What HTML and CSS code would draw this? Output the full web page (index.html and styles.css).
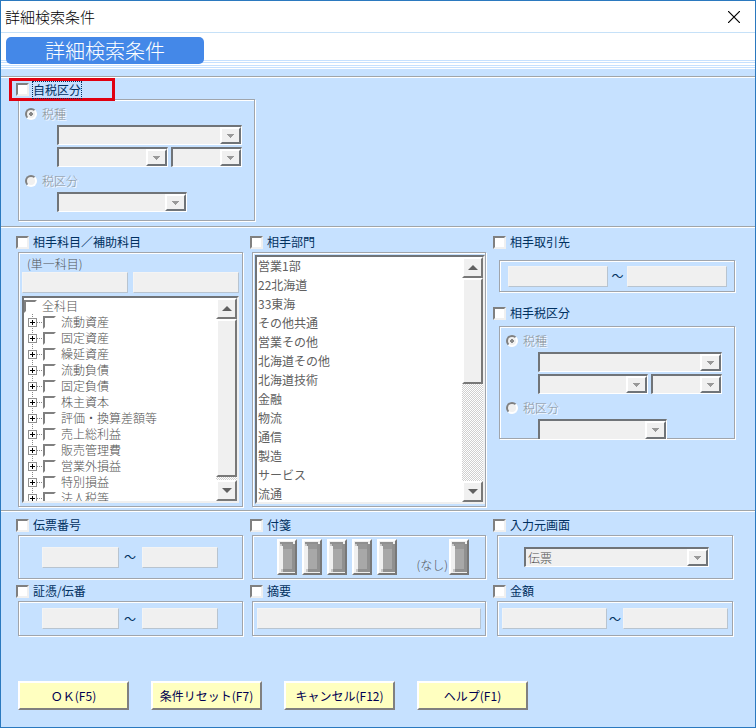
FILE: index.html
```
<!DOCTYPE html>
<html lang="ja">
<head>
<meta charset="utf-8">
<title>詳細検索条件</title>
<link rel="stylesheet" href="styles.css">
</head>
<body>
<div class="window">
  <div class="titlebar">
    <span>詳細検索条件</span>
    <button class="close" type="button" aria-label="閉じる">
      <svg viewBox="0 0 12 12" width="12" height="12"><path d="M0 0L12 12M12 0L0 12"/></svg>
    </button>
  </div>
  <header class="banner"><h1>詳細検索条件</h1></header>

  <form class="form">
    <section class="section own-tax">
      <label class="check marked"><input type="checkbox"><span class="focused">自税区分</span></label>
      <div class="panel tax">
        <label class="radio"><input type="radio" name="own" checked disabled>税種</label>
        <div class="tax-row"><div class="combo"><select disabled aria-label="税種"></select></div></div>
        <div class="tax-row">
          <div class="combo wide"><select disabled aria-label="税率"></select></div>
          <div class="combo narrow"><select disabled aria-label="業種"></select></div>
        </div>
        <label class="radio second"><input type="radio" name="own" disabled>税区分</label>
        <div class="tax-row"><div class="combo part"><select disabled aria-label="税区分"></select></div></div>
      </div>
    </section>

    <section class="section columns accounts">
      <div class="column">
        <label class="check"><input type="checkbox">相手科目／補助科目</label>
        <div class="panel account-panel">
          <div class="caption">(単一科目)</div>
          <div class="pair">
            <input class="field" type="text" disabled aria-label="科目">
            <input class="field" type="text" disabled aria-label="補助科目">
          </div>
          <div class="listbox">
            <ul class="tree">
              <li class="root"><label><input type="checkbox">全科目</label></li>
              <li><i class="plus"></i><label><input type="checkbox">流動資産</label></li>
              <li><i class="plus"></i><label><input type="checkbox">固定資産</label></li>
              <li><i class="plus"></i><label><input type="checkbox">繰延資産</label></li>
              <li><i class="plus"></i><label><input type="checkbox">流動負債</label></li>
              <li><i class="plus"></i><label><input type="checkbox">固定負債</label></li>
              <li><i class="plus"></i><label><input type="checkbox">株主資本</label></li>
              <li><i class="plus"></i><label><input type="checkbox">評価・換算差額等</label></li>
              <li><i class="plus"></i><label><input type="checkbox">売上総利益</label></li>
              <li><i class="plus"></i><label><input type="checkbox">販売管理費</label></li>
              <li><i class="plus"></i><label><input type="checkbox">営業外損益</label></li>
              <li><i class="plus"></i><label><input type="checkbox">特別損益</label></li>
              <li><i class="plus"></i><label><input type="checkbox">法人税等</label></li>
            </ul>
            <div class="scroll">
              <button class="arrow up" type="button" aria-label="上へ"></button>
              <div class="thumb long"></div>
              <div class="track"></div>
              <button class="arrow down" type="button" aria-label="下へ"></button>
            </div>
          </div>
        </div>
      </div>

      <div class="column">
        <label class="check"><input type="checkbox">相手部門</label>
        <div class="panel department-panel">
          <div class="listbox">
            <select class="departments" multiple disabled aria-label="相手部門">
              <option>営業1部</option>
              <option>22北海道</option>
              <option>33東海</option>
              <option>その他共通</option>
              <option>営業その他</option>
              <option>北海道その他</option>
              <option>北海道技術</option>
              <option>金融</option>
              <option>物流</option>
              <option>通信</option>
              <option>製造</option>
              <option>サービス</option>
              <option>流通</option>
            </select>
            <div class="scroll">
              <button class="arrow up" type="button" aria-label="上へ"></button>
              <div class="thumb short"></div>
              <div class="track"></div>
              <button class="arrow down" type="button" aria-label="下へ"></button>
            </div>
          </div>
        </div>
      </div>

      <div class="column">
        <label class="check"><input type="checkbox">相手取引先</label>
        <div class="panel partner-panel">
          <input class="field" type="text" disabled aria-label="取引先 開始">
          <span class="tilde">～</span>
          <input class="field" type="text" disabled aria-label="取引先 終了">
        </div>
        <label class="check partner-tax-label"><input type="checkbox">相手税区分</label>
        <div class="panel tax tight">
          <label class="radio"><input type="radio" name="partner" checked disabled>税種</label>
          <div class="tax-row"><div class="combo"><select disabled aria-label="相手税種"></select></div></div>
          <div class="tax-row">
            <div class="combo wide"><select disabled aria-label="相手税率"></select></div>
            <div class="combo narrow"><select disabled aria-label="相手業種"></select></div>
          </div>
          <label class="radio second"><input type="radio" name="partner" disabled>税区分</label>
          <div class="tax-row"><div class="combo part"><select disabled aria-label="相手税区分"></select></div></div>
        </div>
      </div>
    </section>

    <section class="section columns vouchers">
      <div class="column">
        <label class="check"><input type="checkbox">伝票番号</label>
        <div class="panel tall range">
          <input class="field" type="text" disabled aria-label="伝票番号 開始">
          <span class="tilde">～</span>
          <input class="field" type="text" disabled aria-label="伝票番号 終了">
        </div>
      </div>
      <div class="column">
        <label class="check"><input type="checkbox">付箋</label>
        <div class="panel tall notes">
          <button class="note" type="button" disabled aria-label="付箋1"><svg viewBox="0 0 15 30"><use href="#tag"/></svg></button>
          <button class="note" type="button" disabled aria-label="付箋2"><svg viewBox="0 0 15 30"><use href="#tag"/></svg></button>
          <button class="note" type="button" disabled aria-label="付箋3"><svg viewBox="0 0 15 30"><use href="#tag"/></svg></button>
          <button class="note" type="button" disabled aria-label="付箋4"><svg viewBox="0 0 15 30"><use href="#tag"/></svg></button>
          <button class="note" type="button" disabled aria-label="付箋5"><svg viewBox="0 0 15 30"><use href="#tag"/></svg></button>
          <span class="none">(なし)</span>
          <button class="note" type="button" disabled aria-label="付箋なし"><svg viewBox="0 0 15 30"><use href="#tag"/></svg></button>
        </div>
      </div>
      <div class="column">
        <label class="check"><input type="checkbox">入力元画面</label>
        <div class="panel tall source">
          <div class="combo"><select disabled aria-label="入力元画面"><option>伝票</option></select></div>
        </div>
      </div>
      <div class="column">
        <label class="check"><input type="checkbox">証憑/伝番</label>
        <div class="panel low range">
          <input class="field" type="text" disabled aria-label="証憑 開始">
          <span class="tilde">～</span>
          <input class="field" type="text" disabled aria-label="証憑 終了">
        </div>
      </div>
      <div class="column">
        <label class="check"><input type="checkbox">摘要</label>
        <div class="panel low filled">
          <input class="field" type="text" disabled aria-label="摘要">
        </div>
      </div>
      <div class="column">
        <label class="check"><input type="checkbox">金額</label>
        <div class="panel low filled">
          <input class="field" type="text" disabled aria-label="金額 開始">
          <span class="tilde slim">～</span>
          <input class="field" type="text" disabled aria-label="金額 終了">
        </div>
      </div>
    </section>

    <div class="actions">
      <button type="button">ＯＫ(F5)</button>
      <button type="button">条件リセット(F7)</button>
      <button type="button">キャンセル(F12)</button>
      <button type="button">ヘルプ(F1)</button>
    </div>
  </form>
</div>

<svg class="defs" width="0" height="0" aria-hidden="true">
  <symbol id="tag" viewBox="0 0 15 30">
    <path fill="#909090" d="M0 0H13V2H15V30H2V28H3V4H0z"/>
    <path fill="#a8a8a8" d="M3 7H12V27H3z"/>
    <path fill="#989898" d="M3 2H12V7H3z"/>
    <path fill="#c8c8c8" d="M0 2H2V4H0zM1 27H3V30H1z"/>
  </symbol>
</svg>
</body>
</html>
```
FILE: styles.css
```
* { box-sizing: border-box; }

body {
  margin: 0;
  font: 300 12px/16px "Noto Sans CJK JP", sans-serif;
  color: #003060;
}

input, select, button {
  margin: 0;
  padding: 0;
  font: inherit;
  color: inherit;
  border-radius: 0;
  appearance: none;
}

.defs { position: absolute; }

.window {
  min-height: 100vh;
  border: 1px solid #2b79bf;
  background: #c6e1ff;
}

.titlebar {
  display: flex;
  align-items: center;
  justify-content: space-between;
  height: 31px;
  padding: 0 15px 0 4px;
  background: #fff;
  color: #000;
  font-size: 15px;
}

.close {
  display: flex;
  border: 0;
  background: none;
}

.close path {
  stroke: #000;
  stroke-width: 1.2;
}

.banner {
  height: 37px;
  padding: 4px 5px 0;
  border-top: 1px solid #c6e1f8;
  background: linear-gradient(#fff 27px, #c6e1ff 27px 28px, #fff 28px 29px, #c6e1ff 29px 30px, #fff 30px 32px, #c6e1ff 32px 33px, #fff 33px 34px, #c6e1ff 34px 35px, #fff 35px);
}

.banner h1 {
  width: 198px;
  height: 27px;
  margin: 0;
  border-radius: 5px;
  background: #4488e8;
  color: #fff;
  font-size: 20px;
  font-weight: 300;
  line-height: 28px;
  text-align: center;
}

.form { padding-top: 7px; }

.section {
  padding: 0 20px 0 15px;
  border-top: 1px solid #a0a5a8;
  box-shadow: inset 0 1px #fff;
}

.own-tax { padding-top: 1px; padding-bottom: 5px; }
.own-tax .panel { width: 33%; }

.columns {
  display: grid;
  grid-template-columns: 227fr 236fr 242fr;
  column-gap: 7px;
}

.accounts { padding-top: 5px; padding-bottom: 3px; }
.vouchers { padding-top: 4px; row-gap: 2px; }

.column {
  display: flex;
  flex-direction: column;
  min-width: 0;
}

.check {
  display: flex;
  align-items: center;
  align-self: flex-start;
  gap: 4px;
  height: 20px;
  font-weight: 400;
}

.check input, .tree input {
  width: 13px;
  height: 13px;
  border: 2px solid;
  border-color: #808080 #f0f0f0 #f0f0f0 #808080;
  background: #fff;
}

.check input:checked, .tree input:checked { background: #003060; }

.marked {
  position: relative;
  z-index: 1;
  width: 106px;
  height: 23px;
  margin: 0 0 -2px -7px;
  padding-left: 4px;
  border: 3px solid #e00010;
}

.focused { outline: 1px dotted #003060; }

.panel {
  margin-left: 2px;
  border: 1px solid #a0a5ac;
  box-shadow: 1px 1px #fff, inset 1px 1px #fff;
}

/* tax group */
.tax {
  display: flex;
  flex-direction: column;
  gap: 2px;
  padding: 5px 12px 8px 6px;
}

.radio {
  display: flex;
  align-items: center;
  gap: 5px;
  height: 18px;
  color: #888e94;
  text-shadow: 1px 1px #fff;
}

.radio.second { margin-top: 3px; }

.radio input {
  width: 12px;
  height: 12px;
  border: 2px solid;
  border-color: #808080 #fff #fff #808080;
  border-radius: 50%;
  background: #f0f0f0;
}

.radio input:checked { background: radial-gradient(#888 2px, #f0f0f0 2px); }

.tax-row {
  display: flex;
  gap: 3px;
  margin-left: 32px;
}

.wide { flex: 111 1 0; }
.narrow { flex: 71 1 0; }
.tax-row .part { width: 70%; }
.tight { padding-bottom: 0; }
.tight .tax-row:last-child { margin-bottom: -1px; }
.tight .tax-row:last-child .combo { border-bottom: 0; }

.combo {
  display: flex;
  width: 100%;
  height: 20px;
  border: solid;
  border-width: 2px 1px 1px 2px;
  border-color: #707478 #fff #fff #707478;
  background: #f0f0f0;
}

.combo select {
  flex: 1;
  min-width: 0;
  padding-left: 2px;
  border: 0;
  background: none;
  color: #505050;
  opacity: 1;
}

.combo::after {
  content: "";
  width: 17px;
  border: 2px solid;
  border-color: #fff #707478 #707478 #fff;
  background: linear-gradient(#999, #999) center 5px / 7px 1px no-repeat, linear-gradient(#999, #999) center 6px / 5px 1px no-repeat, linear-gradient(#999, #999) center 7px / 3px 1px no-repeat, linear-gradient(#999, #999) center 8px / 1px 1px no-repeat;
}

.field {
  flex: 1;
  min-width: 0;
  height: 21px;
  border: 1px solid;
  border-color: #f4f4f4 #b8c4d0 #b8c4d0 #f4f4f4;
  background: #f0f0f0;
}

.tilde {
  width: 19px;
  font-weight: 400;
  text-align: center;
}

/* account tree and department list */
.account-panel {
  height: 255px;
  padding: 2px 3px 3px;
}

.caption {
  height: 17px;
  padding-left: 5px;
  line-height: 18px;
  color: #505458;
}

.pair {
  display: flex;
  gap: 5px;
  margin-bottom: 3px;
}

.listbox {
  display: flex;
  border: 2px solid;
  border-color: #707478 #f0f0f0 #f0f0f0 #707478;
  background: #fff;
  color: #505050;
  overflow: hidden;
}

.account-panel .listbox { height: 207px; }

.tree {
  flex: 1;
  margin: 0;
  padding: 0;
  list-style: none;
}

.tree li {
  display: flex;
  align-items: center;
  height: 16px;
  padding-left: 4px;
  background: repeating-linear-gradient(#888 0 1px, #fff 1px 2px) 8px 0 / 1px 16px no-repeat, repeating-linear-gradient(90deg, #888 0 1px, #fff 1px 2px) 13px 8px / 6px 1px no-repeat;
}

.tree .root {
  padding-left: 0;
  background: none;
}

.tree label {
  display: flex;
  align-items: center;
  gap: 5px;
}

.tree input { border-color: #808080 #fff #fff #808080; }

.plus {
  width: 9px;
  height: 9px;
  margin-right: 6px;
  border: 1px solid #909090;
  background: linear-gradient(#000, #000) center / 5px 1px no-repeat, linear-gradient(#000, #000) center / 1px 5px no-repeat, #fff;
}

.scroll {
  display: flex;
  flex-direction: column;
  width: 21px;
}

.arrow, .thumb {
  border: 2px solid;
  border-color: #fff #787878 #787878 #fff;
  background: #f0f0f0;
}

.arrow {
  display: flex;
  align-items: center;
  justify-content: center;
  height: 21px;
}

.arrow::before {
  content: "";
  border: 5px solid transparent;
}

.up::before { border-top: 0; border-bottom-color: #606060; }
.down::before { border-bottom: 0; border-top-color: #606060; }
.long { height: 158px; }
.short { height: 106px; }

.track {
  flex: 1;
  background: repeating-conic-gradient(#d0d0d0 0 25%, #fff 0 50%) 0 0 / 2px 2px;
}

.department-panel {
  height: 255px;
  padding: 2px 0 2px 2px;
}

.department-panel .listbox { height: 100%; }

.departments {
  flex: 1;
  min-width: 0;
  border: 0;
  background: #fff;
  overflow: hidden;
  opacity: 1;
}

.departments option {
  height: 19px;
  min-height: 0;
  padding: 0 0 0 1px;
  line-height: 19px;
  color: #606060;
}

/* trading partner */
.partner-panel {
  display: flex;
  align-items: center;
  height: 32px;
  margin: 8px 0 0 6px;
  padding: 0 7px 0 8px;
}

.partner-tax-label { margin-top: 11px; }
.partner-panel ~ .tax { margin: 3px 0 0 6px; }

/* vouchers */
.tall, .low {
  display: flex;
  align-items: center;
}

.tall { height: 44px; }
.low { height: 35px; }
.range { padding: 0 24px 0 23px; }
.range .tilde { width: 23px; }
.filled { padding: 0 4px; }
.slim { width: 16px; }
.source { padding: 0 23px 0 26px; }

.vouchers .column:nth-child(3n) .panel { margin-left: 4px; margin-right: 2px; }

.notes {
  gap: 5px;
  padding: 0 16px 0 24px;
}

.note {
  display: flex;
  width: 20px;
  height: 36px;
  border: 2px solid;
  border-color: #fff #787878 #787878 #fff;
  background: #f0f0f0;
}

.note svg {
  flex: none;
  width: 15px;
  height: 30px;
  margin: 1px;
}

.none {
  align-self: flex-end;
  margin: 0 -4px 5px auto;
  color: #505458;
}

.actions {
  display: flex;
  flex-wrap: wrap;
  gap: 22px;
  padding: 45px 17px 17px;
}

.actions button {
  width: 111px;
  height: 29px;
  border: 2px solid;
  border-color: #fff #808080 #808080 #fff;
  background: #ffffc0;
  color: #000050;
  font-weight: 400;
}
```
